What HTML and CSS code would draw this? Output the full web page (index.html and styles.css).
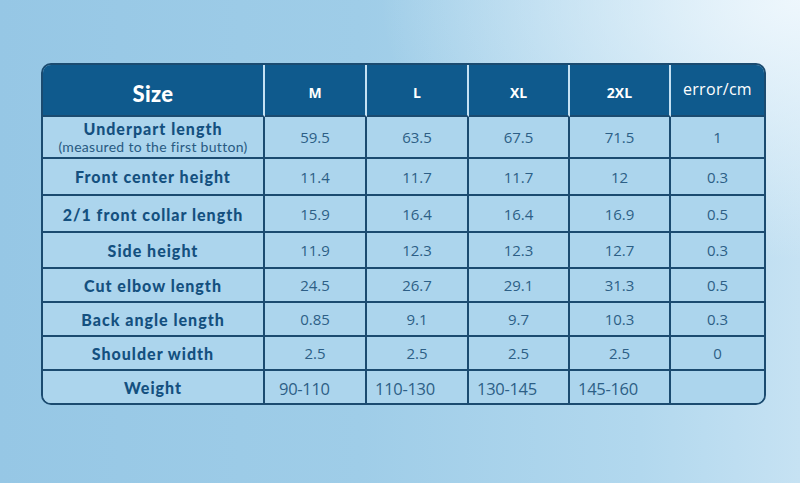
FILE: index.html
```html
<!DOCTYPE html>
<html lang="en">
<head>
<meta charset="utf-8">
<title>Size chart</title>
<link rel="stylesheet" href="styles.css">
</head>
<body>
<main class="page">
  <div class="chart">
    <div class="cell head head-size">Size</div>
    <div class="cell head">M</div>
    <div class="cell head">L</div>
    <div class="cell head">XL</div>
    <div class="cell head">2XL</div>
    <div class="cell head head-err last-col">error/cm</div>

    <div class="cell label r1"><span class="main">Underpart length</span><span class="note">(measured to the first button)</span></div>
    <div class="cell num r1">59.5</div><div class="cell num r1">63.5</div><div class="cell num r1">67.5</div><div class="cell num r1">71.5</div><div class="cell num r1 last-col">1</div>

    <div class="cell label r2">Front center height</div>
    <div class="cell num r2">11.4</div><div class="cell num r2">11.7</div><div class="cell num r2">11.7</div><div class="cell num r2">12</div><div class="cell num r2 last-col">0.3</div>

    <div class="cell label r3">2/1 front collar length</div>
    <div class="cell num r3">15.9</div><div class="cell num r3">16.4</div><div class="cell num r3">16.4</div><div class="cell num r3">16.9</div><div class="cell num r3 last-col">0.5</div>

    <div class="cell label r4">Side height</div>
    <div class="cell num r4">11.9</div><div class="cell num r4">12.3</div><div class="cell num r4">12.3</div><div class="cell num r4">12.7</div><div class="cell num r4 last-col">0.3</div>

    <div class="cell label">Cut elbow length</div>
    <div class="cell num">24.5</div><div class="cell num">26.7</div><div class="cell num">29.1</div><div class="cell num">31.3</div><div class="cell num last-col">0.5</div>

    <div class="cell label">Back angle length</div>
    <div class="cell num">0.85</div><div class="cell num">9.1</div><div class="cell num">9.7</div><div class="cell num">10.3</div><div class="cell num last-col">0.3</div>

    <div class="cell label">Shoulder width</div>
    <div class="cell num">2.5</div><div class="cell num">2.5</div><div class="cell num">2.5</div><div class="cell num">2.5</div><div class="cell num last-col">0</div>

    <div class="cell label last-row">Weight</div>
    <div class="cell num weight w-first last-row">90-110</div><div class="cell num weight last-row">110-130</div><div class="cell num weight last-row">130-145</div><div class="cell num weight last-row">145-160</div><div class="cell num last-row last-col"></div>
  </div>
</main>
</body>
</html>
```

FILE: styles.css
```css
* { box-sizing: border-box; }

html, body {
  margin: 0;
  height: 100%;
}

body {
  background:
    radial-gradient(ellipse 420px 260px at 100% 0%, rgba(240, 248, 253, 0.95) 0%, rgba(240, 248, 253, 0) 100%),
    linear-gradient(to right, #96c7e5 0%, #9fcde8 45%, #b2d8ee 80%, #c6e2f3 100%);
  font-family: "Open Sans", "Noto Sans", sans-serif;
}

.page {
  padding: 63px 0 0 41px;
}

.chart {
  display: grid;
  grid-template-columns: 222px 102px 102px 101px 101px 93px;
  grid-template-rows: 52px 42px 37px 37px 36px 34px 34px 34px 32px;
  width: 725px;
  border: 2px solid #1b4b70;
  border-radius: 10px;
  overflow: hidden;
  background: #acd5ed;
}

.cell {
  display: flex;
  align-items: center;
  justify-content: center;
  border-right: 2px solid #1b4b70;
  border-bottom: 2px solid #1b4b70;
  background: #acd5ed;
}

.last-col { border-right: 0; }
.last-row { border-bottom: 0; }

.head {
  background: #0f5a8d;
  color: #ffffff;
  font-family: "Open Sans", sans-serif;
  font-weight: 700;
  font-size: 14px;
  border-right-color: #c4e1f3;
  border-bottom-color: #1b4b70;
  padding-top: 4px;
}

.head.last-col { border-right: 0; }

.head-size {
  font-family: "Lato", sans-serif;
  font-weight: 900;
  font-size: 22px;
  letter-spacing: 0.3px;
  padding-top: 6px;
}

.head-err {
  font-weight: 400;
  font-size: 16px;
  letter-spacing: 0.3px;
  padding-top: 0;
  padding-bottom: 2px;
}

.label {
  flex-direction: column;
  font-family: "Lato", sans-serif;
  font-weight: 900;
  font-size: 16px;
  color: #14507f;
  letter-spacing: 1px;
  line-height: 17px;
}

.label .main {
  line-height: 19px;
}

.note {
  font-family: "Lato", sans-serif;
  font-weight: 400;
  font-size: 14px;
  letter-spacing: 0.3px;
  line-height: 17px;
  color: #285a82;
}

.num {
  font-family: "Open Sans", sans-serif;
  font-size: 15px;
  color: #2d5f86;
}

.weight {
  justify-content: flex-start;
  padding-left: 8px;
  font-size: 16.5px;
  letter-spacing: -0.3px;
  padding-top: 2px;
}

.w-first { padding-left: 14px; }

.r3 { padding-top: 1px; }
```
